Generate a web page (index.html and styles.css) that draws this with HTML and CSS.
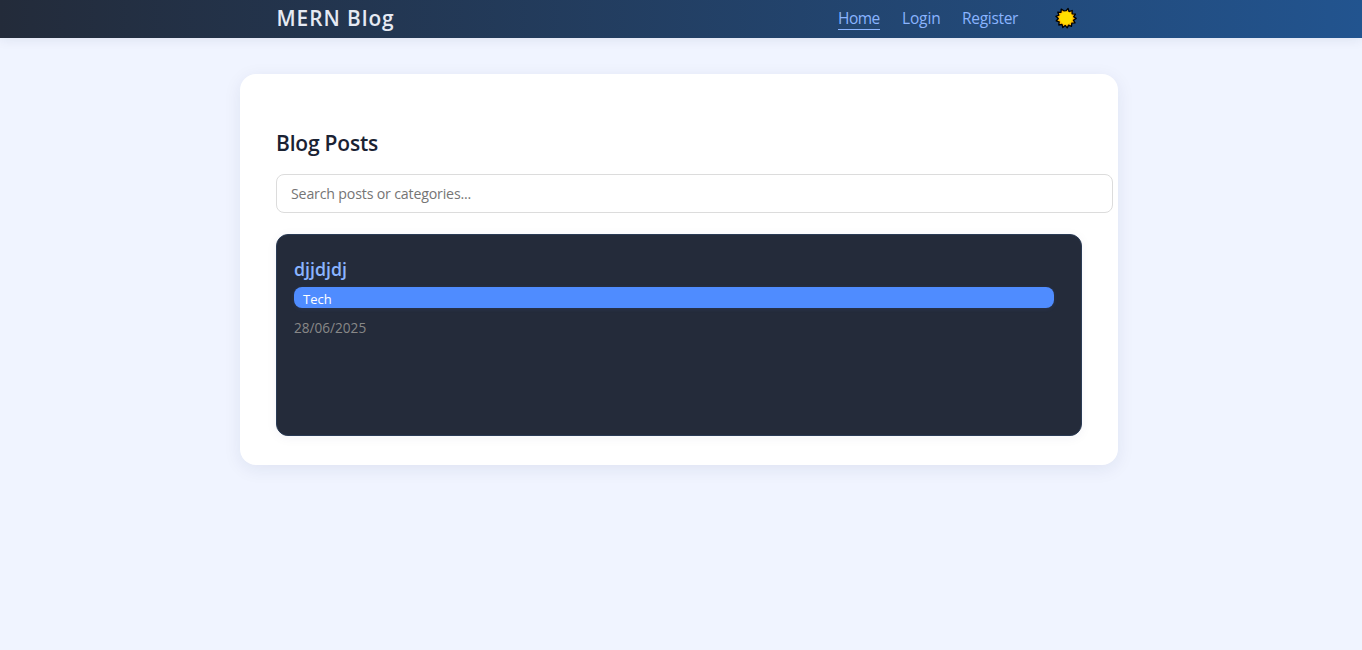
FILE: index.html
```html
<!DOCTYPE html>
<html lang="en">
<head>
<meta charset="utf-8">
<title>MERN Blog</title>
<link rel="stylesheet" href="styles.css">
</head>
<body>
<header class="navbar">
  <div class="navbar-inner">
    <a class="brand">MERN Blog</a>
    <nav class="links">
      <a class="link active">Home</a>
      <a class="link login">Login</a>
      <a class="link register">Register</a>
      <button class="theme-toggle" aria-label="Toggle theme">
        <svg width="22" height="22" viewBox="0 0 22 22">
          <path class="sun-rays" d="M11 3.9 13.1 1.4 14 4.6 17.2 3.5 17.1 6.8 20.4 7.1 18.6 9.8 21.2 11.4 18.4 13.2 20 15.9 16.8 16.2 16.5 19.4 13.6 18.1 12.2 20.9 10.2 18.4 7.8 20.5 7 17.4 3.8 18 4.2 14.9 1.2 14 3.3 11.5 .9 9.3 3.9 8.2 2.8 5.1 6 5.3 6.2 2.1 8.9 3.8Z"/>
          <circle class="sun-core" cx="11" cy="11" r="6.4"/>
        </svg>
      </button>
    </nav>
  </div>
</header>
<main class="container">
  <h2 class="heading">Blog Posts</h2>
  <input class="search" type="text" placeholder="Search posts or categories...">
  <article class="post">
    <h3 class="post-title">djjdjdj</h3>
    <div class="tag">Tech</div>
    <div class="date">28/06/2025</div>
  </article>
</main>
</body>
</html>
```
FILE: styles.css
```css
body {
  margin: 0;
  min-height: 650px;
  background: #f0f4ff;
  font-family: "Open Sans", "Noto Sans", sans-serif;
  color: #1a2233;
}
.navbar {
  height: 38px;
  background: linear-gradient(90deg, #232b3a 0%, #22548f 100%);
  box-shadow: 0 2px 12px rgba(30, 40, 80, 0.08);
}
.navbar-inner {
  box-sizing: border-box;
  width: 878px;
  height: 36px;
  margin-left: 240px;
  padding: 0 41px 0 36.5px;
  display: flex;
  align-items: center;
  justify-content: space-between;
}
.brand {
  font-size: 20.8px;
  line-height: 28px;
  font-weight: 600;
  letter-spacing: 0.95px;
  color: #e6eaf3;
}
.links {
  display: flex;
  align-items: center;
}
.link {
  box-sizing: border-box;
  height: 23px;
  margin-top: 1px;
  font-size: 15.5px;
  line-height: 22px;
  letter-spacing: -0.3px;
  white-space: nowrap;
  color: #8ab4ff;
}
.active {
  width: 42px;
  letter-spacing: -0.5px;
  border-bottom: 1px solid #8ab4ff;
}
.login {
  width: 39px;
  margin-left: 22px;
  letter-spacing: -0.15px;
}
.register {
  width: 56px;
  margin-left: 21px;
}
.theme-toggle {
  width: 22px;
  height: 22px;
  margin-left: 37px;
  padding: 0;
  border: 0;
  background: none;
}
.theme-toggle svg {
  display: block;
}
.sun-rays {
  fill: #ffb900;
  stroke: #000;
  stroke-width: 1.3;
  stroke-linejoin: round;
}
.sun-core {
  fill: #ffde00;
}
.container {
  box-sizing: border-box;
  width: 878px;
  height: 391px;
  margin: 36px 0 0 240px;
  padding: 54px 36px 0;
  border-radius: 16px;
  background: #fff;
  box-shadow: 0 4px 18px rgba(30, 40, 90, 0.08);
}
.heading {
  margin: 0;
  font-size: 21px;
  line-height: 30px;
  font-weight: 600;
  letter-spacing: -0.2px;
}
.search {
  display: block;
  box-sizing: border-box;
  width: 837px;
  height: 39px;
  margin: 16px 0 21px;
  padding: 0 14px;
  border: 1px solid #dcdcdc;
  border-radius: 8px;
  background: #fff;
  font-family: "Open Sans", "Noto Sans", sans-serif;
  font-size: 14.2px;
  letter-spacing: -0.18px;
}
.search::placeholder {
  color: #757575;
}
.post {
  box-sizing: border-box;
  height: 202px;
  padding: 21px 27px 0 17px;
  border: 1px solid #2a3b55;
  border-radius: 12px;
  background: #242b3a;
  box-shadow: 0 2px 12px rgba(30, 40, 90, 0.05);
}
.post-title {
  margin: 0;
  font-size: 17.8px;
  line-height: 26px;
  font-weight: 600;
  color: #8ab4ff;
}
.tag {
  box-sizing: border-box;
  height: 21px;
  margin-top: 5px;
  padding-left: 9px;
  border-radius: 8px;
  background: #4f8cff;
  box-shadow: 0 1px 4px rgba(79, 140, 255, 0.12);
  font-size: 13px;
  line-height: 24px;
  color: #fff;
}
.date {
  margin-top: 10px;
  font-size: 13.6px;
  line-height: 20px;
  color: #888;
}
```
